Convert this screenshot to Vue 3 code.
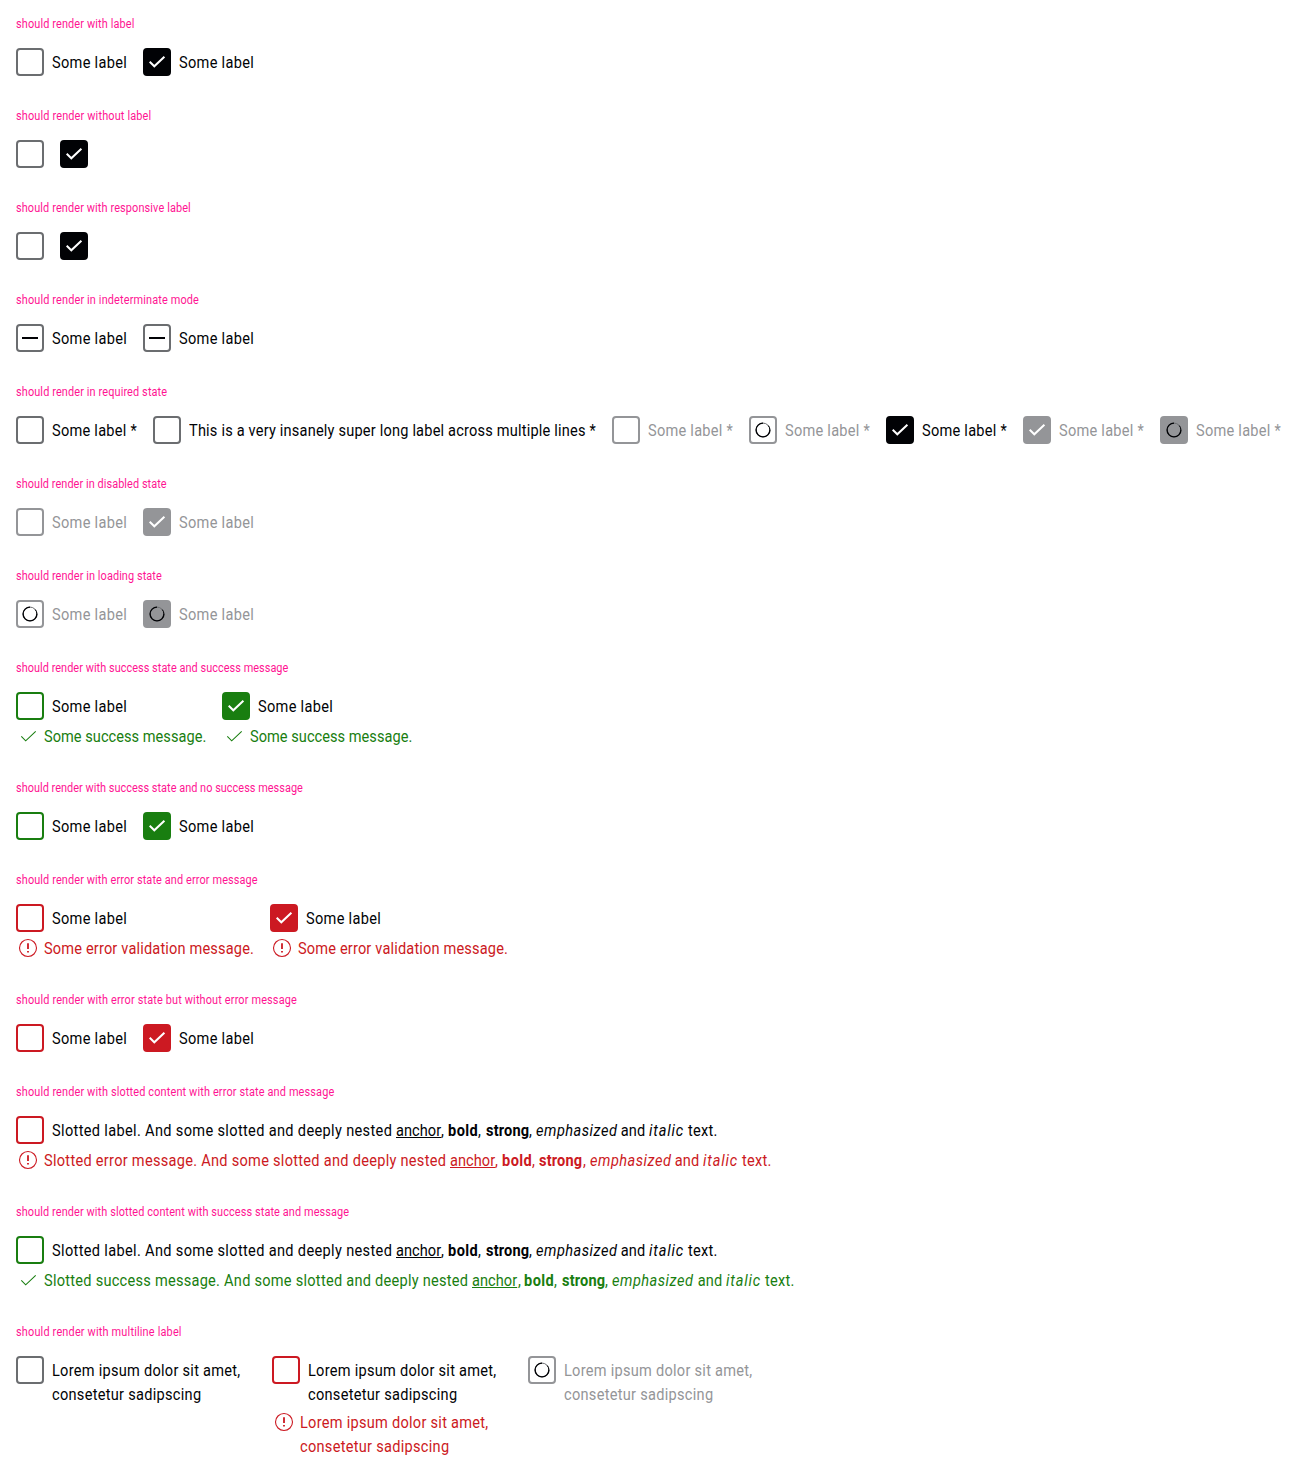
<script setup>
// Draws a run of text in narrowed letters, tracked so that it takes up the given width.
const NARROW = 0.91
const fitText = (el, { value }) => {
  if (!value) return
  el.style.letterSpacing = '0px'
  el.style.marginRight = '0px'
  const natural = el.offsetWidth
  const layout = value / NARROW
  el.style.letterSpacing = `${(layout - natural) / el.textContent.length}px`
  el.style.marginRight = `${value - layout}px`
}
const vFit = { mounted: fitText, updated: fitText }

const plain = (text, width) => [[{ text, width }]]
const some = plain('Some label', 75)
const required = plain('Some label *', 85)
const lorem = [
  [{ text: 'Lorem ipsum dolor sit amet,', width: 188.5 }],
  [{ text: 'consetetur sadipscing', width: 149 }],
]
const slotted = (text, width) => [[
  { text, width },
  { text: 'anchor', width: 45, kind: 'anchor' },
  { text: ', ', width: 6.5 },
  { text: 'bold', width: 30, kind: 'bold' },
  { text: ', ', width: 7 },
  { text: 'strong', width: 43, kind: 'bold' },
  { text: ', ', width: 7 },
  { text: 'emphasized', width: 81.5, kind: 'italic' },
  { text: ' and ', width: 32.5 },
  { text: 'italic', width: 35, kind: 'italic' },
  { text: ' text.', width: 33.5 },
]]
const slottedLabel = slotted('Slotted label. And some slotted and deeply nested ', 344)

const pair = (label, state, message) => [
  { label, state, message },
  { label, state, message, checked: true },
]

const sections = [
  { title: 'should render with label', width: 118.5, items: pair(some) },
  { title: 'should render without label', width: 135, items: pair() },
  { title: 'should render with responsive label', width: 175, items: pair() },
  {
    title: 'should render in indeterminate mode', width: 183,
    items: [{ label: some, indeterminate: true }, { label: some, indeterminate: true }],
  },
  {
    title: 'should render in required state', width: 151,
    items: [
      { label: required },
      { label: plain('This is a very insanely super long label across multiple lines *', 407) },
      { label: required, state: 'disabled' },
      { label: required, state: 'loading' },
      { label: required, checked: true },
      { label: required, state: 'disabled', checked: true },
      { label: required, state: 'loading', checked: true },
    ],
  },
  { title: 'should render in disabled state', width: 151, items: pair(some, 'disabled') },
  { title: 'should render in loading state', width: 146, items: pair(some, 'loading') },
  {
    title: 'should render with success state and success message', width: 272,
    items: pair(some, 'success', plain('Some success message.', 162)),
  },
  { title: 'should render with success state and no success message', width: 287, items: pair(some, 'success') },
  {
    title: 'should render with error state and error message', width: 242,
    items: pair(some, 'error', plain('Some error validation message.', 210)),
  },
  { title: 'should render with error state but without error message', width: 281, items: pair(some, 'error') },
  {
    title: 'should render with slotted content with error state and message', width: 318,
    items: [{
      label: slottedLabel, state: 'error',
      message: slotted('Slotted error message. And some slotted and deeply nested ', 406),
    }],
  },
  {
    title: 'should render with slotted content with success state and message', width: 333,
    items: [{
      label: slottedLabel, state: 'success',
      message: slotted('Slotted success message. And some slotted and deeply nested ', 428),
    }],
  },
  {
    title: 'should render with multiline label', width: 166, wide: true,
    items: [
      { label: lorem },
      { label: lorem, state: 'error', message: lorem },
      { label: lorem, state: 'loading' },
    ],
  },
]
</script>

<template>
  <main class="page">
    <section v-for="section in sections" :key="section.title" class="section">
      <h2 class="title"><span v-fit="section.width" class="run">{{ section.title }}</span></h2>
      <div class="row" :class="{ wide: section.wide }">
        <div v-for="(item, i) in section.items" :key="i" class="item" :class="item.state">
          <div class="field">
            <span class="box" :class="{ checked: item.checked }">
              <svg v-if="item.state === 'loading'" class="glyph" viewBox="0 0 28 28">
                <circle class="spinner-track" cx="14" cy="14" r="6.9" />
                <path class="spinner-arc" d="M14 7.1A6.9 6.9 0 1 0 20.9 14" />
                <path class="spinner-tail" d="M20.9 14A6.9 6.9 0 0 0 19.3 9.6" />
              </svg>
              <svg v-else-if="item.checked" class="glyph" viewBox="0 0 28 28">
                <path class="check" d="M6.7 13.8 11.3 18.3 21.4 8.7" />
              </svg>
              <svg v-else-if="item.indeterminate" class="glyph" viewBox="0 0 28 28">
                <path class="dash" d="M6 14H22" />
              </svg>
            </span>
            <span v-if="item.label" class="label">
              <span v-for="(line, l) in item.label" :key="l" class="line"><span
                v-for="(part, p) in line" :key="p" v-fit="part.width" class="run" :class="part.kind"
              >{{ part.text }}</span></span>
            </span>
          </div>
          <div v-if="item.message" class="message">
            <svg class="message-icon" viewBox="0 0 24 24">
              <path v-if="item.state === 'success'" d="M5.3 12.3 9.7 16.8 19.7 7.3" />
              <template v-else>
                <circle cx="12" cy="12" r="8.5" />
                <path class="mark" d="M12 7.3V13M12 14.9V16.6" />
              </template>
            </svg>
            <span class="message-text">
              <span v-for="(line, l) in item.message" :key="l" class="line"><span
                v-for="(part, p) in line" :key="p" v-fit="part.width" class="run" :class="part.kind"
              >{{ part.text }}</span></span>
            </span>
          </div>
        </div>
      </div>
    </section>
  </main>
</template>

<style>
body {
  margin: 0;
  background: #fff;
}
</style>

<style scoped>
.page {
  display: flex;
  flex-direction: column;
  gap: 32px;
  padding: 16px;
  font-family: Roboto, "Liberation Sans", sans-serif;
  font-size: 16px;
  line-height: 24px;
  color: #010205;
}
.title {
  margin: 0 0 16px;
  height: 16px;
  font-size: 12px;
  font-weight: 400;
  line-height: 16px;
  color: #ff1493;
}
.run {
  display: inline-block;
  vertical-align: top;
  white-space: pre;
  transform: scaleX(0.91);
  transform-origin: left;
}
.row {
  display: flex;
  align-items: flex-start;
  gap: 16px;
}
.item {
  --edge: #6b6d70;
  --fill: #010205;
  flex: none;
}
.wide .item {
  width: 240px;
}
.disabled,
.loading {
  --edge: #949598;
  --fill: #949598;
}
.success {
  --edge: #197e10;
  --fill: #197e10;
}
.error {
  --edge: #cc1922;
  --fill: #cc1922;
}
.field {
  display: flex;
  align-items: flex-start;
  gap: 8px;
}
.box {
  display: flex;
  flex: none;
  align-items: center;
  justify-content: center;
  box-sizing: border-box;
  width: 28px;
  height: 28px;
  border: 2px solid var(--edge);
  border-radius: 4px;
}
.box.checked {
  border-color: var(--fill);
  background: var(--fill);
}
.glyph {
  flex: none;
  width: 28px;
  height: 28px;
  fill: none;
}
.check {
  stroke: #fff;
  stroke-width: 2;
}
.dash {
  stroke: #010205;
  stroke-width: 2;
}
.spinner-track {
  stroke: #6b6d70;
  stroke-width: 1;
}
.spinner-arc {
  stroke: #010205;
  stroke-width: 1.4;
}
.spinner-tail {
  stroke: #010205;
  stroke-width: 1;
}
.label {
  margin-bottom: -1px;
  padding-top: 3px;
}
.disabled .label,
.loading .label {
  color: #949598;
}
.line {
  display: block;
  height: 24px;
  white-space: pre;
}
.message {
  display: flex;
  align-items: flex-start;
  gap: 4px;
  margin-top: 4px;
  color: var(--edge);
}
.message-text {
  margin-bottom: -1px;
  padding-top: 1px;
}
.message-icon {
  flex: none;
  width: 24px;
  height: 24px;
  fill: none;
  stroke: currentColor;
  stroke-width: 1.1;
}
.mark {
  stroke-width: 1.8;
}
.anchor {
  text-decoration: underline;
  text-decoration-thickness: 1px;
}
.bold {
  font-weight: 700;
}
.italic {
  font-style: italic;
}
</style>
